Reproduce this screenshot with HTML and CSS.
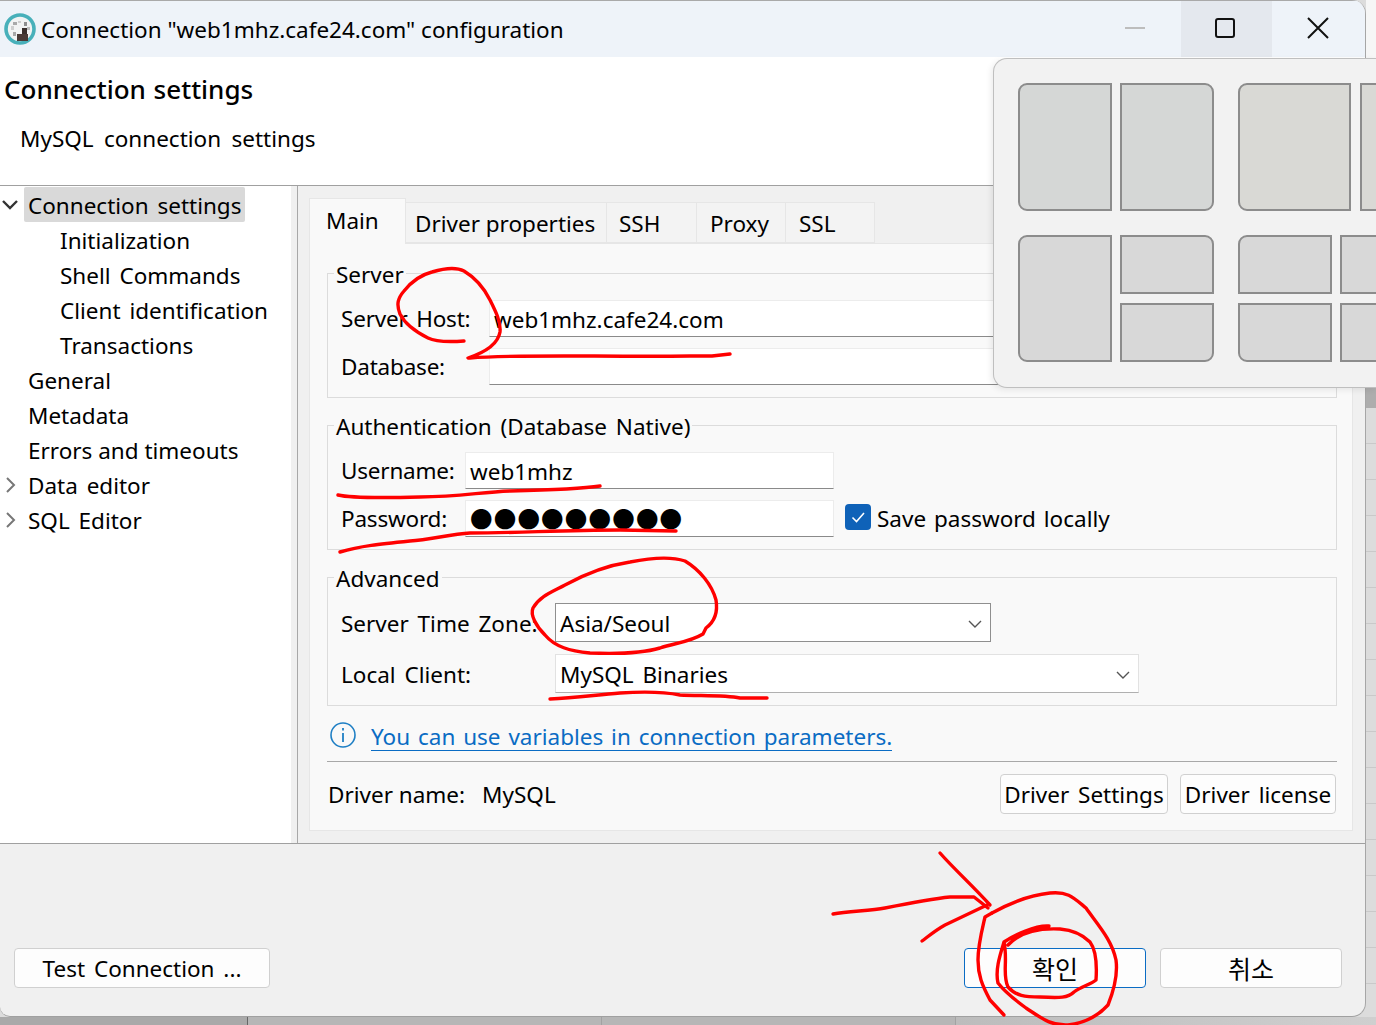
FILE: index.html
```html
<!DOCTYPE html>
<html lang="en">
<head>
<meta charset="utf-8">
<title>Connection configuration</title>
<link rel="stylesheet" href="styles.css">
</head>
<body>
<div class="desk-top">
<div class="window">
  <header class="titlebar">
    <svg class="app-icon" width="32" height="32" viewBox="0 0 32 32">
      <circle cx="16" cy="16" r="14" fill="#f2f3f3" stroke="#48b0ba" stroke-width="3.6"/>
      <rect x="7" y="13" width="3" height="4" fill="#cfcfcf"/>
      <rect x="9" y="9" width="4" height="3" fill="#a9a9a9"/>
      <rect x="14" y="8" width="3" height="2" fill="#d0d0d0"/>
      <rect x="20" y="9" width="3" height="4" fill="#8f8f8f"/>
      <rect x="23" y="14" width="3" height="3" fill="#bdbdbd"/>
      <rect x="13" y="21" width="11" height="7" fill="#4a3a36"/>
      <rect x="18" y="15" width="5" height="6" fill="#3a2f2c"/>
      <rect x="9" y="19" width="3" height="4" fill="#a8a8a8"/>
    </svg>
    <span class="window-title">Connection "web1mhz.cafe24.com" configuration</span>
    <div class="controls">
      <div class="control"><svg width="22" height="22" viewBox="0 0 22 22"><path d="M1 11h20" stroke="#bdbdbd" stroke-width="2"/></svg></div>
      <div class="control control-hover"><svg width="22" height="22" viewBox="0 0 22 22"><rect x="2" y="2" width="18" height="18" rx="2" fill="none" stroke="#111" stroke-width="2"/></svg></div>
      <div class="control"><svg width="22" height="22" viewBox="0 0 22 22"><path d="M1 1l20 20M21 1L1 21" stroke="#111" stroke-width="2" fill="none"/></svg></div>
    </div>
  </header>

  <section class="page-head">
    <h1 class="page-title">Connection settings</h1>
    <p class="page-sub">MySQL connection settings</p>
  </section>

  <div class="body-row">
    <nav class="tree">
      <div class="tree-row"><svg class="twisty" width="18" height="18" viewBox="0 0 18 18"><path d="M1 5l7 7 7-7" fill="none" stroke="#333" stroke-width="2.4"/></svg><span class="tree-label selected">Connection settings</span></div>
      <div class="tree-row child"><span class="tree-label">Initialization</span></div>
      <div class="tree-row child"><span class="tree-label">Shell Commands</span></div>
      <div class="tree-row child"><span class="tree-label">Client identification</span></div>
      <div class="tree-row child"><span class="tree-label">Transactions</span></div>
      <div class="tree-row"><span class="twisty"></span><span class="tree-label">General</span></div>
      <div class="tree-row"><span class="twisty"></span><span class="tree-label">Metadata</span></div>
      <div class="tree-row"><span class="twisty"></span><span class="tree-label tight">Errors and timeouts</span></div>
      <div class="tree-row"><svg class="twisty" width="18" height="18" viewBox="0 0 18 18"><path d="M5 2l7 7-7 7" fill="none" stroke="#777" stroke-width="2"/></svg><span class="tree-label">Data editor</span></div>
      <div class="tree-row"><svg class="twisty" width="18" height="18" viewBox="0 0 18 18"><path d="M5 2l7 7-7 7" fill="none" stroke="#777" stroke-width="2"/></svg><span class="tree-label">SQL Editor</span></div>
    </nav>
    <div class="splitter"></div>

    <main class="content">
      <div class="tabs">
        <div class="tab tab-active">Main</div>
        <div class="tab tab-driver">Driver properties</div>
        <div class="tab tab-ssh">SSH</div>
        <div class="tab tab-proxy">Proxy</div>
        <div class="tab tab-ssl">SSL</div>
      </div>
      <div class="panel">
        <fieldset class="group">
          <legend>Server</legend>
          <div class="form form-server">
            <label>Server Host:</label><div class="input">web1mhz.cafe24.com</div>
            <label>Database:</label><div class="input"></div>
          </div>
        </fieldset>
        <fieldset class="group">
          <legend>Authentication (Database Native)</legend>
          <div class="form form-auth">
            <label>Username:</label><div class="input">web1mhz</div><span></span>
            <label>Password:</label><div class="input dots">●●●●●●●●●</div>
            <div class="check"><span class="checkbox"><svg width="26" height="26" viewBox="0 0 26 26"><path d="M7.5 13.5l4 4 7.5-8.5" fill="none" stroke="#fff" stroke-width="1.6"/></svg></span>Save password locally</div>
          </div>
        </fieldset>
        <fieldset class="group group-adv">
          <legend>Advanced</legend>
          <div class="form form-adv">
            <label>Server Time Zone:</label>
            <div class="input combo combo-tz">Asia/Seoul<svg width="14" height="8" viewBox="0 0 14 8"><path d="M1 1l6 6 6-6" fill="none" stroke="#555" stroke-width="1.4"/></svg></div>
            <label>Local Client:</label>
            <div class="input combo combo-local">MySQL Binaries<svg width="14" height="8" viewBox="0 0 14 8"><path d="M1 1l6 6 6-6" fill="none" stroke="#555" stroke-width="1.4"/></svg></div>
          </div>
        </fieldset>
        <div class="info">
          <svg width="28" height="28" viewBox="0 0 28 28"><circle cx="14" cy="14" r="12" fill="none" stroke="#1f7fc4" stroke-width="1.6"/><path d="M14 12v9M14 7v2.4" stroke="#1f7fc4" stroke-width="1.8"/></svg>
          <a class="link" href="#">You can use variables in connection parameters.</a>
        </div>
        <div class="driver-row">
          <span class="driver-key">Driver name:</span><span>MySQL</span>
          <div class="driver-btns">
            <button class="btn btn-settings">Driver Settings</button>
            <button class="btn btn-license">Driver license</button>
          </div>
        </div>
      </div>
    </main>
  </div>

  <footer class="footer">
    <button class="btn btn-test">Test Connection ...</button>
    <div class="footer-right">
      <button class="btn btn-action btn-default">확인</button>
      <button class="btn btn-action">취소</button>
    </div>
  </footer>
</div>
<div class="desk-side">
  <div class="side-light"></div>
  <div class="side-dark"></div>
  <div class="side-grid"></div>
</div>
</div>
<div class="desk-bottom">
  <div class="cell cell-dark"></div>
  <div class="cell cell-mid"></div>
  <div class="cell cell-mid"></div>
  <div class="cell cell-light"></div>
</div>

<div class="snap">
  <div class="snap-col">
    <div class="snap-row">
      <div class="tile t-w94 tl bl cool"></div>
      <div class="tile t-w94 tr br cool"></div>
    </div>
    <div class="snap-row snap-row-low">
      <div class="tile t-w94 tl bl"></div>
      <div class="snap-stack">
        <div class="tile t-w94 tr"></div>
        <div class="tile t-w94 br"></div>
      </div>
    </div>
  </div>
  <div class="snap-col">
    <div class="snap-row snap-row-wide">
      <div class="tile t-w113 tl bl warm"></div>
      <div class="tile t-w113 warm"></div>
    </div>
    <div class="snap-row snap-row-low">
      <div class="snap-stack">
        <div class="tile t-w94 tl"></div>
        <div class="tile t-w94 bl"></div>
      </div>
      <div class="snap-stack">
        <div class="tile t-w94"></div>
        <div class="tile t-w94"></div>
      </div>
    </div>
  </div>
</div>

<svg class="ink" width="1376" height="1025" viewBox="0 0 1376 1025">
  <path d="M464 341C450 342 436 342 428 338C416 332 405 324 400 314C396 304 398 298 404 291C412 281 420 275 432 272C442 269 456 267 464 271C474 277 484 288 490 300C496 312 501 322 500 332C498 344 486 352 468 358L470 358C520 354 600 357 690 356L712 356L730 354"/>
  <path d="M338 495C350 498 380 498 420 497C460 497 480 492 510 491C550 490 580 489 600 486"/>
  <path d="M340 552C360 546 380 544 410 541C430 540 450 534 470 533C520 533 560 530 620 530L676 531"/>
  <path d="M706 628L703 634C690 642 675 643 660 648C640 654 615 654 590 653C570 651 555 647 545 635C536 626 530 615 533 608C540 596 552 592 565 585C585 574 610 565 630 562C650 558 670 556 685 561C700 570 712 585 716 600C718 612 714 622 706 628"/>
  <path d="M550 699C575 698 595 695 620 693C650 691 665 692 680 695C700 696 725 695 740 698L767 698"/>
  <path d="M833 914C850 911 870 911 885 908C910 903 930 899 950 897L974 897L988 908"/>
  <path d="M940 853C955 870 972 885 990 905"/>
  <path d="M922 941C930 935 936 930 945 925L987 905"/>
  <path d="M992 913C1010 903 1030 895 1050 893C1068 891 1074 898 1086 908C1098 925 1112 940 1116 960C1118 975 1114 990 1108 1005C1098 1016 1085 1023 1068 1025C1050 1026 1040 1017 1026 1008C1015 1000 1005 992 998 983C995 970 1000 955 1004 942C1015 935 1035 925 1049 926M1004 942C1008 960 1002 975 1008 987C1016 996 1025 997 1040 997C1060 998 1068 998 1074 992C1082 986 1090 985 1096 980C1097 965 1096 950 1090 942C1082 934 1072 930 1060 929C1040 928 1020 932 1008 945"/>
  <path d="M992 913L985 917C982 930 978 945 978 960C978 975 982 985 990 1000L1004 1015"/>
</svg>
</body>
</html>
```
FILE: styles.css
```css
* { box-sizing: border-box; }
html, body { margin: 0; padding: 0; }
body {
  position: relative;
  width: 1376px;
  height: 1025px;
  overflow: hidden;
  background: #dcdcdc;
  font-family: "Noto Sans", "Noto Sans CJK KR", sans-serif;
  font-size: 22.5px;
  word-spacing: 3px;
  color: #000;
}
.desk-top { display: flex; height: 1017px; }
.desk-side { flex: 1; display: flex; flex-direction: column; }
.side-light { height: 58px; background: #f6f6f6; }
.side-dark { height: 350px; background: #adadad; }
.side-grid {
  flex: 1;
  background: repeating-linear-gradient(to bottom, #dcdcdc 0, #dcdcdc 35px, #c9c9c9 35px, #c9c9c9 36px);
}
.desk-bottom { display: flex; height: 8px; }
.cell { height: 100%; }
.cell-dark { width: 248px; background: #a9a9a9; border-right: 1px solid #666; }
.cell-mid { width: 150px; flex: 1; background: #b6b6b6; border-right: 1px solid #a2a2a2; }
.cell-light { width: 420px; flex: none; background: linear-gradient(to right, #bcbcbc, #cfcfcf); }
.window {
  width: 1366px;
  height: 1017px;
  flex: none;
  display: flex;
  flex-direction: column;
  background: #f0f0f0;
  border-radius: 0 14px 14px 10px;
  border-right: 1px solid #a6a6a6;
  border-bottom: 1px solid #a0a0a0;
  overflow: hidden;
}
.titlebar {
  height: 57px;
  flex: none;
  display: flex;
  align-items: center;
  background: #eef3f9;
  border-top: 1px solid #a9a9a9;
  padding-left: 4px;
}
.app-icon { flex: none; margin-right: 5px; }
.window-title { flex: 1; word-spacing: 0; }
.controls { display: flex; height: 100%; }
.control { width: 91px; display: flex; align-items: center; justify-content: center; }
.control:last-child { width: 93px; }
.control svg { margin: 0 2px 3px 0; }
.control-hover svg { margin-right: 4px; }
.control-hover { background: #e4e8ee; }

.page-head {
  height: 129px;
  flex: none;
  background: #fff;
  border-bottom: 1px solid #a0a0a0;
  padding-top: 15px;
}
.page-title {
  margin: 0 0 0 4px;
  font-size: 26px;
  word-spacing: 1px;
  line-height: 34px;
  font-weight: 500;
}
.page-sub { margin: 17px 0 0 20px; line-height: 32px; word-spacing: 4.5px; }

.body-row { flex: none; height: 658px; display: flex; border-bottom: 1px solid #a0a0a0; }
.tree { width: 291px; flex: none; background: #fff; padding-top: 1px; }
.tree-row { height: 35px; display: flex; align-items: center; padding-left: 2px; }
.tree-row.child { padding-left: 56px; }
.twisty { width: 18px; flex: none; margin-right: 4px; }
.tree-label { padding: 0 4px; height: 35px; line-height: 37px; border-radius: 2px; white-space: nowrap; }
.tight { word-spacing: 0; }
.selected { background: #d9d9d9; }
.splitter { width: 7px; flex: none; background: #f0f0f0; border-right: 1px solid #a8a8a8; }

.content { flex: 1; padding: 11px 12px 12px 11px; display: flex; flex-direction: column; }
.tabs { display: flex; height: 46px; flex: none; align-items: flex-end; word-spacing: 0; }
.tab {
  height: 41px;
  background: #f3f3f3;
  border: 1px solid #e6e6e6;
  border-left: 0;
  padding: 0 0 0 9px;
  line-height: 41px;
}
.tab-active {
  width: 97px;
  height: 46px;
  background: #f9f9f9;
  border-left: 1px solid #e6e6e6;
  border-bottom: 0;
  padding-left: 16px;
  line-height: 44px;
  position: relative;
  top: 1px;
}
.tab-driver { width: 201px; }
.tab-ssh { width: 90px; padding-left: 12px; }
.tab-proxy { width: 89px; padding-left: 13px; }
.tab-ssl { width: 89px; padding-left: 13px; }
.panel {
  flex: 1;
  background: #f9f9f9;
  border: 1px solid #e6e6e6;
  padding: 14px 15px 0 17px;
}
.group {
  margin: 0 0 12px;
  padding: 12px 0 12px 13px;
  border: 1px solid #dcdcdc;
  min-width: 0;
}
.group-adv { padding-top: 11px; }
.group legend { padding: 0 2px; margin-left: -7px; line-height: 33px; height: 30px; }
.form { display: grid; align-items: center; }
.form label { white-space: nowrap; }
.form-server { grid-template-columns: 148px 832px; grid-auto-rows: 37px; row-gap: 11px; }
.form-auth { grid-template-columns: 124px 369px 1fr; grid-auto-rows: 37px; row-gap: 11px; }
.form-server label, .form-auth label { letter-spacing: -.2px; }
.form-adv { grid-template-columns: 214px auto; grid-auto-rows: 39px; row-gap: 12px; justify-items: start; }
.form-adv label { padding-top: 2px; }
.input {
  height: 37px;
  background: #fff;
  border: 1px solid #ececec;
  border-bottom: 1px solid #8a8a8a;
  padding-left: 4px;
  line-height: 38px;
  white-space: nowrap;
}
.dots { font-size: 22.5px; letter-spacing: 1.2px; line-height: 38px; padding-left: 4px; word-spacing: 0; }
.check { display: flex; align-items: center; margin-left: 11px; word-spacing: 2px; }
.checkbox {
  width: 26px; height: 26px; background: #0f62b8; border-radius: 4px; margin: 0 6px 4px 0; display: block;
}
.checkbox svg { display: block; }
.combo { display: flex; align-items: center; justify-content: space-between; padding: 2px 8px 0 4px; line-height: normal; }
.combo-tz { width: 436px; height: 39px; border: 1px solid #8f8f8f; }
.combo-local { width: 584px; height: 39px; border: 1px solid #e2e2e2; border-bottom-color: #b0b0b0; }
.info { display: flex; align-items: center; height: 30px; margin-top: 16px; padding-left: 2px; }
.info svg { margin: 0 14px 4px 0; }
.link { color: #0a6cc4; text-decoration: none; border-bottom: 1px solid #0a6cc4; line-height: 27px; word-spacing: 2px; }
.driver-row {
  margin-top: 9px;
  border-top: 1px solid #a8a8a8;
  display: flex;
  align-items: center;
  padding-top: 12px;
  padding-left: 1px;
}
.driver-key { margin-right: 17px; word-spacing: 0; }
.driver-btns { margin-left: auto; display: flex; gap: 12px; margin-right: 1px; }
.btn {
  height: 40px;
  background: #fdfdfd;
  border: 1px solid #d0d0d0;
  border-radius: 4px;
  font: inherit;
  word-spacing: inherit;
  color: #000;
  padding: 0;
}
.btn-settings { width: 168px; }
.btn-license { width: 156px; }
.footer {
  flex: 1;
  display: flex;
  align-items: flex-end;
  justify-content: space-between;
  padding: 0 23px 28px 14px;
}
.btn-test { width: 256px; }
.footer-right { display: flex; gap: 14px; }
.btn-action { width: 182px; font-size: 25px; }
.btn-default { border-color: #0a6cc4; }

.snap {
  position: absolute;
  left: 993px;
  top: 58px;
  width: 383px;
  height: 330px;
  overflow: hidden;
  background: #f2f2f2;
  border: 1px solid #bfbfbf;
  border-right: 0;
  border-radius: 14px 0 0 14px;
  box-shadow: -2px 2px 6px rgba(0,0,0,.08);
  padding: 24px 0 0 24px;
  display: flex;
  gap: 24px;
}
.snap-col { display: flex; flex-direction: column; gap: 24px; flex: none; }
.snap-row { display: flex; gap: 8px; height: 128px; }
.snap-row-low { height: 127px; }
.snap-row-wide { gap: 9px; }
.snap-stack { display: flex; flex-direction: column; gap: 9px; }
.snap-stack .tile { height: 59px; }
.tile { background: #d8d8d8; border: 2px solid #8c8c8c; flex: none; }
.t-w94 { width: 94px; }
.t-w113 { width: 113px; }
.warm { background: #d9d9d5; }
.cool { background: #d5d7d6; }
.tl { border-top-left-radius: 9px; }
.tr { border-top-right-radius: 9px; }
.bl { border-bottom-left-radius: 9px; }
.br { border-bottom-right-radius: 9px; }

.ink { position: absolute; left: 0; top: 0; pointer-events: none; }
.ink path { fill: none; stroke: #f00; stroke-width: 3.4; stroke-linecap: round; stroke-linejoin: round; }
```
